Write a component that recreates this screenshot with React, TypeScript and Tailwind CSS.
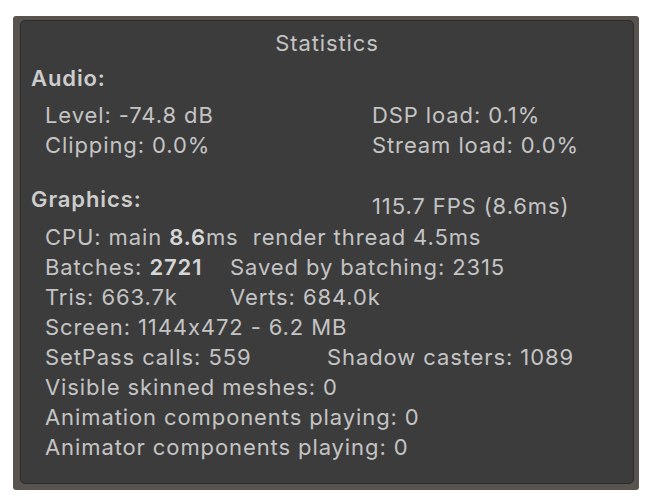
import React from "react";

function Row({ children, className = "" }: { children: React.ReactNode; className?: string }) {
  return <div className={`flex h-[30px] items-start leading-[30px] whitespace-nowrap ${className}`}>{children}</div>;
}

export default function App() {
  return (
    <div className="h-[502px] w-[650px] bg-white pl-[13px] pt-[16px]" style={{ fontFamily: "Inter, 'Noto Sans', sans-serif" }}>
      {/* outer frame */}
      <div className="h-[474px] w-[626px] rounded-[3px] bg-[#58534e] pb-[6px] pl-[7px] pr-[5px] pt-[4px]">
        {/* panel */}
        <div className="h-full w-full rounded-[5px] border border-[#2c2c2c] bg-[#3c3c3c] text-[22px] tracking-[0.9px] text-[#c4c4c4] [font-feature-settings:'calt'_0]">
          <div className="mt-[7px] h-[30px] text-center leading-[30px]">Statistics</div>

          {/* Audio */}
          <div className="mt-[5px] pl-[10px]">
            <Row className="font-semibold text-[#cdcdcd]">Audio:</Row>
          </div>
          <div className="mt-[7px] pl-[24px]">
            <Row>
              <span className="w-[327px]">Level: -74.8 dB</span>
              <span>DSP load: 0.1%</span>
            </Row>
            <Row>
              <span className="w-[327px]">Clipping: 0.0%</span>
              <span>Stream load: 0.0%</span>
            </Row>
          </div>

          {/* Graphics */}
          <div className="mt-[24px] pl-[10px]">
            <Row>
              <span className="w-[341px] font-semibold text-[#cdcdcd]">Graphics:</span>
              <span className="pt-[7px]">115.7 FPS (8.6ms)</span>
            </Row>
          </div>
          <div className="mt-[8px] pl-[24px]">
            <Row>
              <span>
                CPU: main <b className="font-semibold text-[#d6d6d6]">8.6</b>ms&nbsp; render thread 4.5ms
              </span>
            </Row>
            <Row>
              <span className="w-[185px]">
                Batches: <b className="font-semibold text-[#d6d6d6]">2721</b>
              </span>
              <span>Saved by batching: 2315</span>
            </Row>
            <Row>
              <span className="w-[185px]">Tris: 663.7k</span>
              <span>Verts: 684.0k</span>
            </Row>
            <Row>Screen: 1144x472 - 6.2 MB</Row>
            <Row>
              <span className="w-[282px]">SetPass calls: 559</span>
              <span>Shadow casters: 1089</span>
            </Row>
            <Row>Visible skinned meshes: 0</Row>
            <Row>Animation components playing: 0</Row>
            <Row>Animator components playing: 0</Row>
          </div>
        </div>
      </div>
    </div>
  );
}
